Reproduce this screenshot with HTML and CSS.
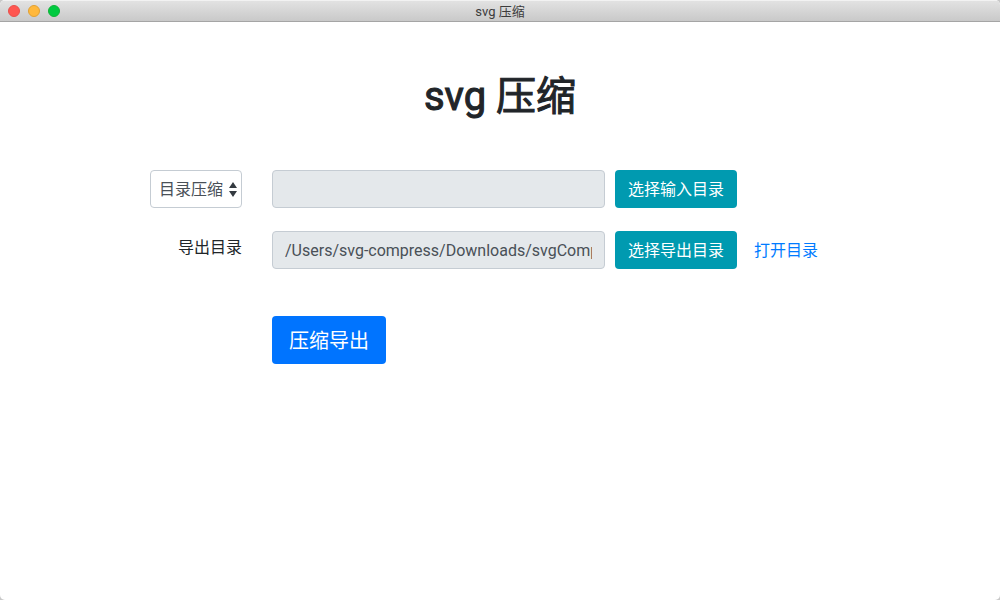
FILE: index.html
```html
<!DOCTYPE html>
<html lang="zh-CN">
<head>
<meta charset="utf-8">
<meta name="viewport" content="width=device-width, initial-scale=1">
<title>svg 压缩</title>
<link rel="stylesheet" href="styles.css">
</head>
<body>
<div class="window">
  <header class="titlebar">
    <div class="lights">
      <button class="light light-close" type="button" aria-label="关闭"></button>
      <button class="light light-min" type="button" aria-label="最小化"></button>
      <button class="light light-max" type="button" aria-label="缩放"></button>
    </div>
    <span class="titlebar-text">svg 压缩</span>
  </header>
  <main class="content">
    <h1 class="heading">svg 压缩</h1>
    <form class="form">
      <div class="row">
        <select class="select" aria-label="压缩方式">
          <option>目录压缩</option>
        </select>
        <input class="field" type="text" aria-label="输入目录" readonly>
        <div class="actions">
          <button class="btn btn-info" type="button">选择输入目录</button>
        </div>
      </div>
      <div class="row">
        <label class="label" for="output">导出目录</label>
        <input class="field" id="output" type="text" value="/Users/svg-compress/Downloads/svgCompress" readonly>
        <div class="actions">
          <button class="btn btn-info" type="button">选择导出目录</button>
          <a class="link" href="#">打开目录</a>
        </div>
      </div>
      <div class="row row-submit">
        <button class="btn btn-primary" type="submit">压缩导出</button>
      </div>
    </form>
  </main>
</div>
</body>
</html>
```
FILE: styles.css
```css
* {
  box-sizing: border-box;
}

body {
  margin: 0;
  background: #c8c8c8;
  color: #212529;
  font-family: Roboto, "Noto Sans CJK SC", sans-serif;
  font-size: 16px;
  line-height: 24px;
}

button,
input,
select {
  margin: 0;
  font: inherit;
}

.window {
  min-height: 100vh;
  overflow: hidden;
  border-radius: 5px;
  background: #fff;
}

.titlebar {
  display: grid;
  grid-template-columns: 1fr auto 1fr;
  align-items: center;
  height: 22px;
  border-top: 1px solid #f2f2f2;
  border-bottom: 1px solid #a5a5a5;
  background: linear-gradient(#e2e2e2, #c9c9c9);
}

.lights {
  display: flex;
  gap: 8px;
  padding-left: 8px;
}

.light {
  width: 12px;
  height: 12px;
  padding: 0;
  border: 1px solid;
  border-radius: 50%;
}

.light-close {
  border-color: #e8504b;
  background: #ff5650;
}

.light-min {
  border-color: #e0a033;
  background: #ffb83c;
}

.light-max {
  border-color: #10b237;
  background: #00ca40;
}

.titlebar-text {
  padding-top: 2px;
  color: #3c3c3c;
  font-size: 13px;
  line-height: 18px;
}

.content {
  padding: 50px 15%;
}

.heading {
  margin: 0 0 48px;
  font-size: 40px;
  font-weight: 400;
  line-height: 50px;
  text-align: center;
  -webkit-text-stroke: 1px currentColor;
}

.form {
  display: grid;
  gap: 23px;
}

.row {
  display: grid;
  grid-template-columns: 92px minmax(0, 1fr) 235px;
  align-items: center;
}

.select,
.field {
  height: 38px;
  border: 1px solid #c5ccd3;
  border-radius: 4px;
  color: #495057;
}

.select {
  width: 100%;
  padding: 2px 8px 0;
  appearance: none;
  background: #fff url("data:image/svg+xml,%3Csvg xmlns='http://www.w3.org/2000/svg' viewBox='0 0 8 15'%3E%3Cpath fill='%23343a40' d='M4 0L0 6h8zM4 15L0 9h8z'/%3E%3C/svg%3E") no-repeat right 4px center / 8px 15px;
}

.field {
  min-width: 0;
  margin: 0 10px 0 30px;
  padding: 6px 12px;
  background: #e4e8eb;
}

.label {
  align-self: start;
  padding-top: 5px;
  text-align: right;
}

.actions {
  display: flex;
  align-items: center;
  gap: 17px;
}

.btn {
  border: 0;
  border-radius: 4px;
  color: #fff;
  white-space: nowrap;
}

.btn-info {
  height: 38px;
  padding: 2px 13px 0;
  background: #009ab0;
}

.btn-primary {
  grid-column: 2;
  justify-self: start;
  height: 48px;
  margin-left: 30px;
  padding: 2px 17px 0;
  background: #0074ff;
  font-size: 20px;
}

.row-submit {
  padding-top: 24px;
}

.link {
  padding-top: 2px;
  color: #007bff;
  text-decoration: none;
  white-space: nowrap;
}
```
